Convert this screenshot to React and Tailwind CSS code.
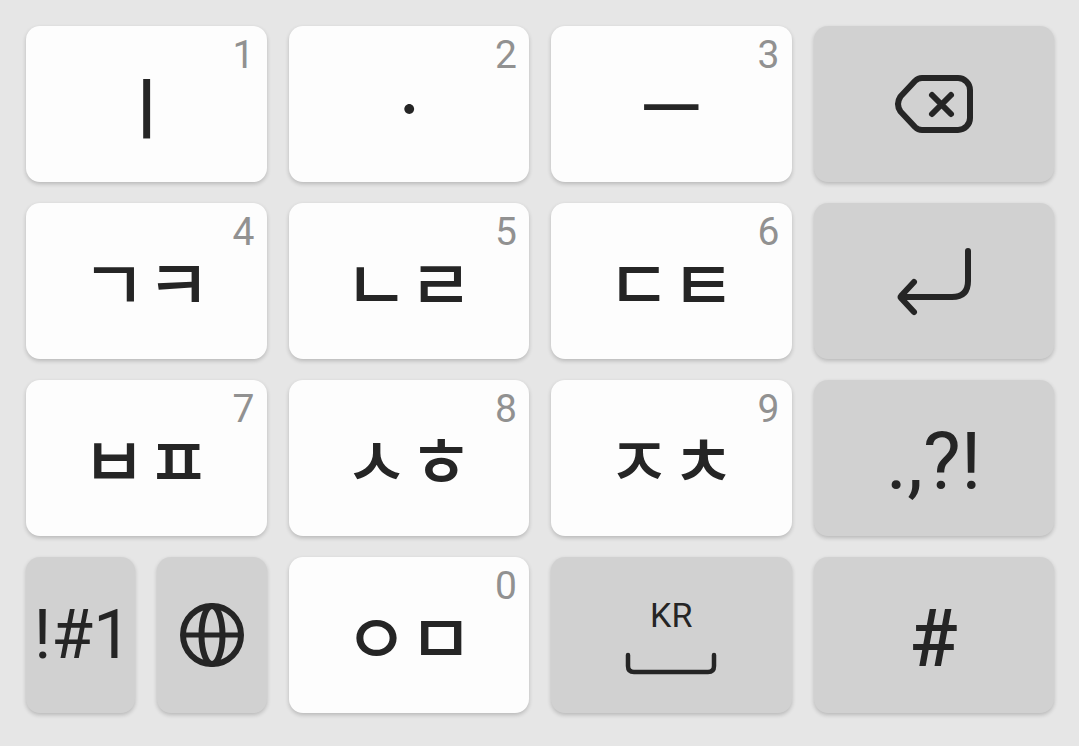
import clsx from "clsx";

const rows = [
  [
    { id: "i", label: "ㅣ", digit: "1" },
    { id: "dot", label: "ㆍ", digit: "2" },
    { id: "eu", label: "ㅡ", digit: "3" },
    { id: "backspace", name: "Backspace", icon: "backspace" },
  ],
  [
    { id: "gk", label: "ㄱㅋ", digit: "4" },
    { id: "nr", label: "ㄴㄹ", digit: "5" },
    { id: "dt", label: "ㄷㅌ", digit: "6" },
    { id: "enter", name: "Enter", icon: "enter" },
  ],
  [
    { id: "bp", label: "ㅂㅍ", digit: "7" },
    { id: "sh", label: "ㅅㅎ", digit: "8" },
    { id: "jc", label: "ㅈㅊ", digit: "9" },
    { id: "punct", label: ".,?!" },
  ],
];

const BackspaceIcon = () => (
  <svg
    className="w-20 h-16"
    viewBox="0 0 80 64"
    fill="none"
    stroke="currentColor"
    strokeWidth="6"
    strokeLinecap="round"
    strokeLinejoin="round"
  >
    <path d="M28 6H64a12 12 0 0 1 12 12V46a12 12 0 0 1-12 12H28Q24 58 21 55L6.500 39.500Q1.500 32 6.500 24.500L21 9Q24 6 28 6Z" />
    <path d="M38 23L57 42M57 23L38 42" />
  </svg>
);

const EnterIcon = () => (
  <svg
    className="w-20 h-[72px]"
    viewBox="0 0 80 72"
    fill="none"
    stroke="currentColor"
    strokeWidth="6"
    strokeLinecap="round"
    strokeLinejoin="round"
  >
    <path d="M74 6V36Q74 52 58 52H8" />
    <path d="M20 37L7 51Q6 52 7 53L20 67" />
  </svg>
);

const GlobeIcon = () => (
  <svg
    className="w-16 h-16"
    viewBox="0 0 64 64"
    fill="none"
    stroke="currentColor"
    strokeWidth="6"
  >
    <circle cx="32" cy="32" r="29" />
    <ellipse cx="32" cy="32" rx="10.5" ry="29" />
    <path d="M3 32H61" strokeWidth="5" />
  </svg>
);

const SpaceIcon = () => (
  <svg
    className="w-24 h-6"
    viewBox="0 0 96 24"
    fill="none"
    stroke="currentColor"
    strokeWidth="4.5"
    strokeLinecap="round"
  >
    <path d="M5 4V15Q5 21 11 21H85Q91 21 91 15V4" />
  </svg>
);

const icons = {
  backspace: <BackspaceIcon />,
  enter: <EnterIcon />,
};

const Key = ({ dark, name, className, children }) => (
  <button
    type="button"
    aria-label={name}
    className={clsx(
      "relative flex min-w-0 items-center justify-center rounded-[14px] shadow-[0_2px_4px_rgba(0,0,0,0.2)]",
      dark ? "bg-[#d1d1d1]" : "bg-[#fdfdfd]",
      className
    )}
  >
    {children}
  </button>
);

const LetterKey = ({ label, digit }) => (
  <Key>
    <span className="absolute top-[9px] right-3 text-[39px] leading-10 font-normal text-[#919191]">
      {digit}
    </span>
    <span
      lang="ko"
      className={clsx(
        "font-['Noto_Sans_CJK_KR',sans-serif] leading-[80px] font-medium",
        label.length > 1 ? "text-[70px]" : "text-[66px]"
      )}
    >
      {label}
    </span>
  </Key>
);

const SymbolLabel = ({ className, children }) => (
  <span className={clsx("pt-2 text-[80px] leading-[80px]", className)}>
    {children}
  </span>
);

const App = () => {
  return (
    <main className="grid grid-cols-4 auto-rows-[156px] gap-x-[22px] gap-y-[21px] bg-[#e6e6e6] pt-[26px] pr-[25px] pb-[33px] pl-[26px] font-[Roboto,sans-serif] text-[#252525]">
      {rows.flat().map((key) =>
        key.digit ? (
          <LetterKey key={key.id} label={key.label} digit={key.digit} />
        ) : (
          <Key key={key.id} dark name={key.name}>
            {key.icon ? (
              icons[key.icon]
            ) : (
              <SymbolLabel>{key.label}</SymbolLabel>
            )}
          </Key>
        )
      )}

      {/* Bottom row */}
      <div className="grid grid-cols-2 gap-[22px]">
        <Key dark>
          <span className="pl-1 text-[68px] leading-[80px]">!#1</span>
        </Key>
        <Key dark name="Change language">
          <GlobeIcon />
        </Key>
      </div>
      <LetterKey label="ㅇㅁ" digit="0" />
      <Key dark className="flex-col gap-4">
        <span className="text-[34px] leading-10">KR</span>
        <SpaceIcon />
      </Key>
      <Key dark>
        <SymbolLabel className="font-medium">#</SymbolLabel>
      </Key>
    </main>
  );
};

export default App;
